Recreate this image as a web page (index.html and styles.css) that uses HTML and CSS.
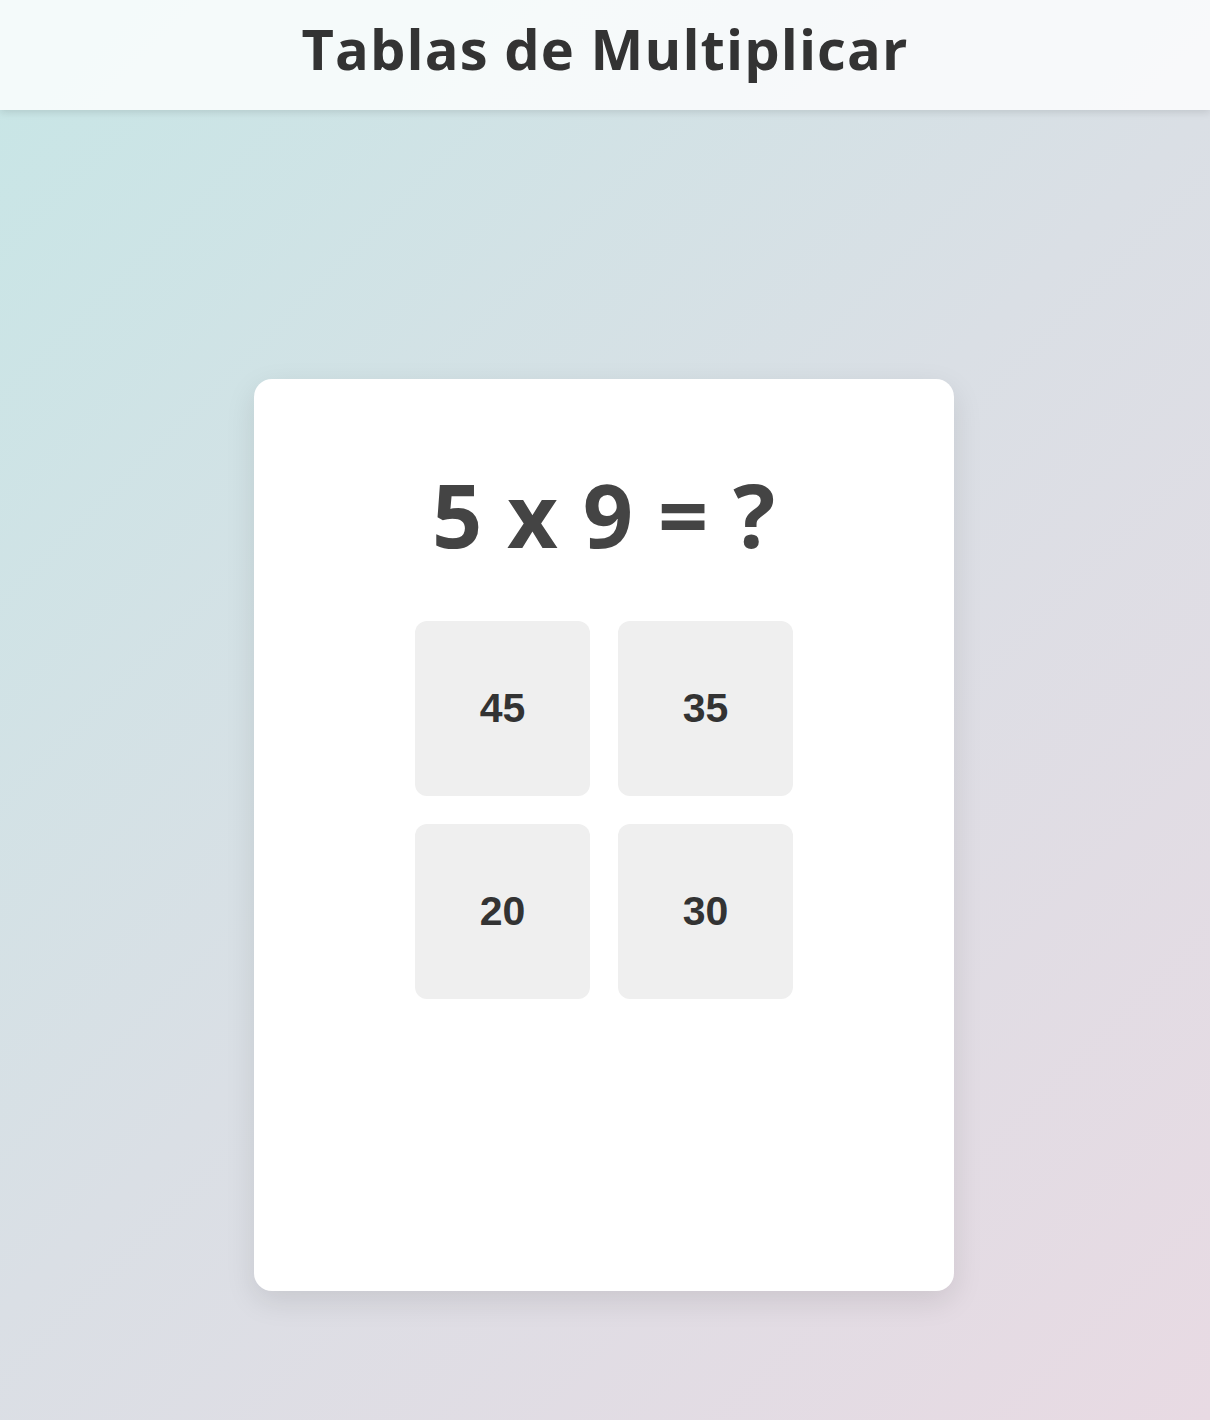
FILE: index.html
```html
<!DOCTYPE html>
<html lang="es">
<head>
<meta charset="utf-8">
<title>Tablas de Multiplicar</title>
<link rel="stylesheet" href="styles.css">
</head>
<body>
<header class="top-bar">
  <h1 class="title">Tablas de Multiplicar</h1>
</header>
<main class="stage">
  <section class="card">
    <h2 class="question">5 x 9 = ?</h2>
    <div class="options">
      <button class="option">45</button>
      <button class="option">35</button>
      <button class="option">20</button>
      <button class="option">30</button>
    </div>
  </section>
</main>
</body>
</html>
```
FILE: styles.css
```css
* { box-sizing: border-box; }
html, body { margin: 0; padding: 0; }
body {
  min-height: 1420px;
  background: linear-gradient(135deg, #c7e6e6 0%, #dadfe5 50%, #e8dae3 100%);
  font-family: "Liberation Sans", Arial, sans-serif;
}
.top-bar {
  height: 110px;
  background: rgba(255, 255, 255, 0.8);
  box-shadow: 0 2px 8px rgba(0, 0, 0, 0.12);
  display: flex;
  align-items: center;
  justify-content: center;
}
.title {
  margin: 0 0 14px;
  font-family: "Open Sans", sans-serif;
  font-weight: 700;
  font-size: 56px;
  letter-spacing: 1.1px;
  color: #333;
}
.stage {
  display: flex;
  justify-content: center;
  padding-top: 269px;
  padding-right: 2px;
}
.card {
  width: 700px;
  height: 912px;
  background: #fff;
  border-radius: 18px;
  box-shadow: 0 10px 30px rgba(0, 0, 0, 0.1);
  padding-top: 82px;
  display: flex;
  flex-direction: column;
  align-items: center;
}
.question {
  margin: 0 0 54px;
  font-family: "Open Sans", sans-serif;
  font-weight: 700;
  font-size: 88px;
  line-height: 106px;
  letter-spacing: 1px;
  color: #444;
}
.options {
  display: grid;
  grid-template-columns: 175px 175px;
  gap: 28px;
}
.option {
  width: 175px;
  height: 175px;
  border: none;
  border-radius: 12px;
  background: #efefef;
  font-family: "Liberation Sans", Arial, sans-serif;
  font-weight: 700;
  font-size: 41px;
  color: #333;
  padding: 0;
}
```
